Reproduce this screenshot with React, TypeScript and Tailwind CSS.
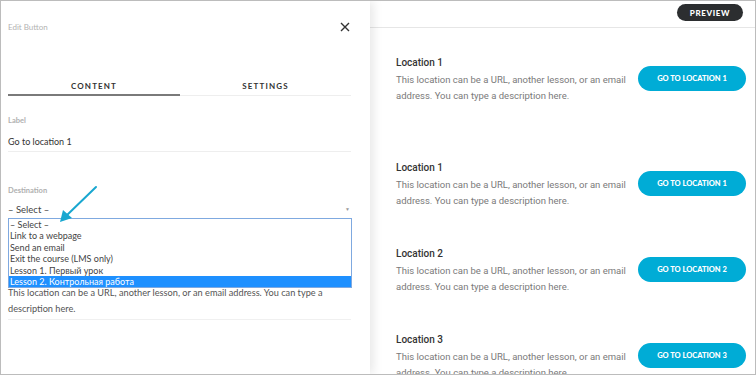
import React from "react";

const lato = "font-['Lato','Liberation_Sans',sans-serif]";
const roboto = "font-['Roboto','Liberation_Sans',sans-serif]";

const options = [
  "– Select –",
  "Link to a webpage",
  "Send an email",
  "Exit the course (LMS only)",
  "Lesson 1. Первый урок",
  "Lesson 2. Контрольная работа",
];

const blocks = [
  { title: "Location 1", btn: "GO TO LOCATION 1", mt: "mt-[28px]" },
  { title: "Location 1", btn: "GO TO LOCATION 1", mt: "mt-[57px]" },
  { title: "Location 2", btn: "GO TO LOCATION 2", mt: "mt-[38px]" },
  { title: "Location 3", btn: "GO TO LOCATION 3", mt: "mt-[38px]" },
];

function EditPanel() {
  return (
    <div
      className={`relative z-10 flex w-[369px] shrink-0 flex-col bg-white pl-[7px] shadow-[3px_0_10px_rgba(0,0,0,0.10)] ${lato}`}
    >
      <div className="mt-[19px] flex h-[14px] w-[343px] items-center justify-between">
        <span className="text-[8px] text-[#b3b3b3]">Edit Button</span>
        <svg width="10" height="10" viewBox="0 0 10 10" className="mr-[1px]">
          <path d="M1 1 L9 9 M9 1 L1 9" stroke="#333" strokeWidth="1.4" />
        </svg>
      </div>

      <div className="mt-[43px] flex w-[343px] border-b border-[#eeeeee]">
        <div className="-mb-px flex h-[19px] w-[172px] items-center justify-center border-b-2 border-[#7a7a7a] text-[8px] font-bold tracking-[0.14em] text-[#333]">
          CONTENT
        </div>
        <div className="flex h-[18px] flex-1 items-center justify-center text-[8px] font-bold tracking-[0.14em] text-[#333]">
          SETTINGS
        </div>
      </div>

      <div className="mt-[20px] w-[343px] text-[7.5px] font-bold leading-[10px] text-[#b0b0b0]">
        Label
      </div>
      <div className="mt-[9px] w-[343px] border-b border-[#eeeeee] pb-[2px] text-[9px] leading-[14px] text-[#333]">
        Go to location 1
      </div>

      <div className="mt-[34px] w-[343px] text-[7.5px] font-bold leading-[10px] text-[#b0b0b0]">
        Destination
      </div>
      <div className="relative mt-[7px] w-[343px]">
        <div className="flex h-[14px] items-center justify-between text-[9.5px] text-[#444]">
          <span>– Select –</span>
          <span className="mr-[1px] text-[5px] text-[#999]">▼</span>
        </div>
        <div className="absolute left-0 top-[15px] z-20 w-[344px] border border-[#7fa9e0] bg-white">
          {options.map((o, i) => (
            <div
              key={o}
              className={
                i === options.length - 1
                  ? "h-[11.4px] bg-[#1e90ff] pl-px text-[9px] leading-[11.4px] text-white"
                  : "h-[11.4px] pl-px text-[9px] leading-[11.4px] text-[#444]"
              }
            >
              {o}
            </div>
          ))}
        </div>
      </div>
      <div className="mt-[68px] w-[343px] border-b border-[#f0f0f0] pb-[2px] text-[9.2px] leading-[16px] text-[#555]">
        This location can be a URL, another lesson, or an email address. You can type a description here.
      </div>

      <svg
        className="absolute left-[54px] top-[182px] z-30"
        width="46"
        height="44"
        viewBox="0 0 46 44"
      >
        <path d="M41 4 L10 34" stroke="#19a7d0" strokeWidth="2" strokeLinecap="round" />
        <path d="M5 39 L8 27 L17 35 Z" fill="#19a7d0" />
      </svg>
    </div>
  );
}

function Preview() {
  return (
    <div className="flex min-w-0 flex-1 flex-col bg-white">
      <div className="flex h-[27px] shrink-0 items-start justify-end border-b border-[#e6e6e6] pr-[12px] pt-[3px]">
        <div
          className={`flex h-[17px] w-[66px] items-center justify-center rounded-full bg-[#2c2e30] text-[8px] font-black tracking-[0.08em] text-white ${lato}`}
        >
          PREVIEW
        </div>
      </div>
      {blocks.map((b, i) => (
        <div key={i} className={`${b.mt} flex items-start pl-[26px]`}>
          <div className={`w-[235px] ${roboto}`}>
            <div className="text-[10px] font-medium leading-[14px] text-[#333]">{b.title}</div>
            <div className="mt-[2px] text-[9.5px] leading-[16px] text-[#7a7a7a]">
              This location can be a URL, another lesson, or an email address. You can type a description here.
            </div>
          </div>
          <div
            className={`ml-[7px] mt-[10px] flex h-[25px] w-[108px] items-center justify-center rounded-full bg-[#00acd6] text-[7.5px] font-black text-white ${lato}`}
          >
            {b.btn}
          </div>
        </div>
      ))}
    </div>
  );
}

export default function App() {
  return (
    <div className="flex h-[375px] w-[756px] overflow-hidden border border-[#bcbcbc] bg-white">
      <EditPanel />
      <Preview />
    </div>
  );
}
